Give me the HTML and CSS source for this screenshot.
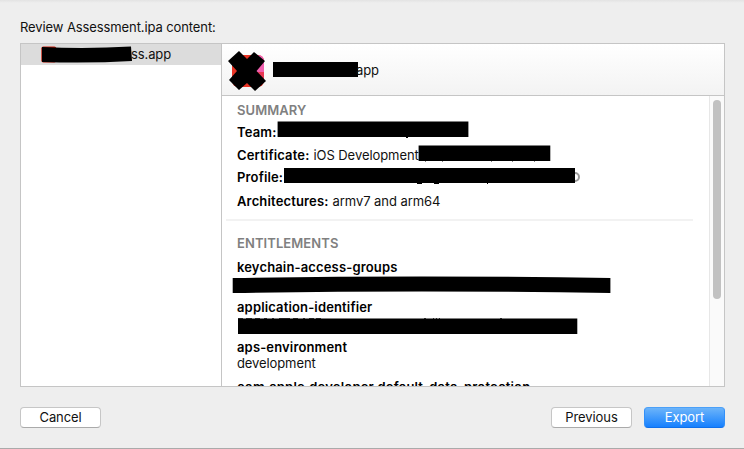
FILE: index.html
```html
<!DOCTYPE html>
<html lang="en">
<head>
<meta charset="utf-8">
<title>Review Assessment.ipa content</title>
<link rel="stylesheet" href="styles.css">
</head>
<body>
<main class="sheet">
  <h1 class="title">Review Assessment.ipa content:</h1>
  <section class="browser">
    <aside class="sidebar">
      <div class="file">
        <span class="file-name">ss.app</span>
        <svg class="file-mask" width="94" height="20" viewBox="0 0 94 20"><rect x="0.3" y="2.5" width="15" height="16" rx="2" fill="#c71d0b"/><path d="M1 3Q46 5 90 2.5L91 17Q48 19.500 1 18Z"/></svg>
      </div>
    </aside>
    <div class="detail">
      <header class="app-header">
        <svg class="app-icon" width="40" height="42" viewBox="0 0 40 42"><rect x="4" y="5" width="32" height="32" rx="6" fill="#e93425"/><path d="M31 5Q36 6 36 11V22H28V8Z" fill="#ef5fae"/><path d="M28 22H36V32L30 36Z" fill="#e73752"/><path d="M11 1L19 9L26 2L37 11L28.500 21L38 31L27 41L19 33L11 40L1 30L9 21L0 11Z"/></svg>
        <span class="app-mask"></span>
        <span class="app-name">app</span>
      </header>
      <div class="content">
        <div class="scroller">
          <section class="summary">
            <h2>SUMMARY</h2>
            <p class="team"><b>Team:</b><svg class="mask" width="192" height="18"><path d="M.6 .6H191.400V16H.6Z"/><path d="M129 16h2v1h-2z"/></svg></p>
            <p class="certificate"><b>Certificate:</b> <span class="cert-value">iOS Development</span><svg class="mask" width="133" height="18"><path d="M.6 .6H132.300V16H.6Z"/><path d="M7 16h1v1H7zM24 16h1v1h-1zM73 16h1v1h-1zM94 16h1v1h-1zM116 16h1v1h-1z" fill="#888"/></svg></p>
            <p class="profile"><b>Profile:</b><svg class="mask" width="298" height="18"><circle cx="292" cy="9" r="4" fill="none" stroke="#999" stroke-width="2"/><path d="M1 0H292V15H1Z"/><path d="M134 15h5v1h-5zM151 15h5v1h-5zM204 15h1v1h-1z"/></svg></p>
            <p class="architectures"><b>Architectures:</b> <span class="arch-value">armv7 and arm64</span></p>
          </section>
          <section class="entitlements">
            <h2>ENTITLEMENTS</h2>
            <h3 class="keychain">keychain-access-groups</h3>
            <div class="value"><svg class="mask" width="380" height="20"><path d="M.7 3Q190 0 378.400 3V18Q190 15 .7 18Z"/></svg></div>
            <h3 class="identifier">application-identifier</h3>
            <div class="value id-value"><svg class="mask" width="342" height="20"><path d="M2 2.600H341.300V18H2Z"/><path d="M2 2.500h5M10 2.500h6M19 2.500h5M28 2.500h3M36 2.500h2M43 2.500h11M57 2.500h5M67 2.500h2M73 2.500h5M80 2.500h5M188 2.500h2M197 2.500h1M200 2.500h1M203 2.500h1M264 2.500h2" stroke="#222"/></svg></div>
            <h3 class="environment">aps-environment</h3>
            <div class="value"><span class="dev">development</span></div>
            <h3 class="protection">com.apple.developer.default-data-protection</h3>
          </section>
        </div>
        <div class="scrollbar"><div class="thumb"></div></div>
      </div>
    </div>
  </section>
  <footer class="actions">
    <button class="cancel">Cancel</button>
    <button class="previous">Previous</button>
    <button class="export">Export</button>
  </footer>
</main>
</body>
</html>
```
FILE: styles.css
```css
* { box-sizing: border-box; }
body { margin: 0; background: #eee; font: 13px/14px Inter, "Liberation Sans", sans-serif; color: #111; letter-spacing: -.1px; }
h1, h2, h3, p { margin: 0; font-size: 13px; white-space: nowrap; }
svg { overflow: visible; }
.sheet { height: 449px; padding: 19px 19px 0 20px; border-bottom: 1px solid #aaa; background: linear-gradient(#e3e3e3, #eee 3px); overflow: hidden; }
.title { height: 24px; font-weight: 400; line-height: 16px; }
.browser { display: flex; height: 344px; border: 1px solid #c5c5c5; background: #fff; }
.sidebar { width: 201px; border-right: 1px solid #c5c5c5; }
.file { position: relative; height: 21px; padding: 3px 0 0 110px; background: #dcdcdc; }
.file-mask { position: absolute; left: 20px; top: 0; }
.detail { flex: 1; display: flex; flex-direction: column; min-width: 0; }
.app-header { display: flex; height: 52px; padding: 6px 0 0 6px; border-bottom: 1px solid #c5c5c5; background: linear-gradient(#fff, #f3f3f3); }
.app-mask { width: 85px; height: 15px; margin: 12px 0 0 5px; background: #000; }
.app-name { margin: 13px 0 0 -2px; }
.content { flex: 1; display: flex; min-height: 0; }
.scroller { flex: 1; overflow: hidden; }
.summary { height: 125px; margin: 0 16px 0 4px; padding: 7px 0 0 11px; border-bottom: 2px solid #f2f2f2; }
.summary p { position: relative; display: flex; gap: 4px; height: 16px; }
.mask { position: absolute; }
h2 { height: 16px; color: #808080; font-weight: 600; letter-spacing: .08px; }
b, h3 { font-weight: 600; color: #000; letter-spacing: .15px; }
.cert-value, .arch-value { letter-spacing: -.06px; }
.team { margin-top: 6px; }
.team .mask { left: 40px; top: -4px; }
.certificate { margin-top: 7px; }
.certificate .mask { left: 181px; top: -3px; }
.profile { margin-top: 6px; }
.profile .mask { left: 46px; top: -2px; }
.architectures { margin-top: 8px; }
.entitlements { padding: 15px 0 0 15px; }
.entitlements h3 { height: 16px; }
.entitlements .protection { letter-spacing: .2px; }
.keychain { margin-top: 8px; }
.value { position: relative; height: 24px; }
.value .mask { left: -5px; top: -1px; }
.id-value .mask { left: -1px; top: 0; }
.scrollbar { width: 15px; padding: 4px 3px 0; border-left: 1px solid #e7e7e7; background: #fafafa; }
.thumb { width: 8px; height: 199px; border-radius: 4px; background: #c1c1c1; }
.actions { display: flex; padding-top: 20px; }
button { width: 81px; height: 21px; padding: 0 0 2px; border: 1px solid #c6c6c6; border-bottom-color: #aaa; border-radius: 4px; background: #fff; color: #111; font: inherit; letter-spacing: inherit; }
.previous { margin-left: auto; margin-right: 12px; }
.export { border-color: #4ba0f8 #3290f9 #0f6fea; background: linear-gradient(#6cb4fa, #1680fe); color: #fff; }
```
